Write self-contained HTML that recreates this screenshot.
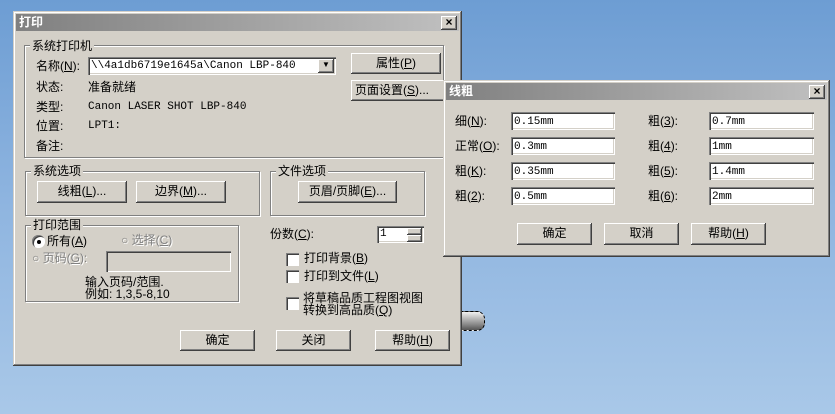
<!DOCTYPE html>
<html><head><meta charset="utf-8"><style>
*{margin:0;padding:0;box-sizing:border-box}
body{width:835px;height:414px;overflow:hidden;position:relative;background:linear-gradient(#6d9dd3,#8fb5e0 50%,#a9c8e8);font-family:"Liberation Sans","Noto Sans CJK SC",sans-serif;font-size:12px;color:#000}
.a{position:absolute;white-space:nowrap;line-height:14px}
.dlg{position:absolute;background:#d4d0c8;box-shadow:inset -1px -1px #404040,inset 1px 1px #d4d0c8,inset -2px -2px #808080,inset 2px 2px #fff}
.tb{position:absolute;left:3px;right:3px;top:3px;height:17px;background:linear-gradient(90deg,#808080,#c0c0c0);color:#fff;font-weight:bold;padding-left:3px;line-height:17px;font-size:12px}
.x{position:absolute;right:2px;top:2px;width:16px;height:14px;background:#d4d0c8;box-shadow:inset -1px -1px #404040,inset 1px 1px #fff,inset -2px -2px #808080;color:#000;font-weight:bold;font-size:12px;line-height:13px;text-align:center;font-family:"Liberation Sans",sans-serif}
.btn{position:absolute;background:#d4d0c8;box-shadow:inset -1px -1px #404040,inset 1px 1px #fff,inset -2px -2px #808080;text-align:center;line-height:20px;white-space:nowrap}
.f{position:absolute;background:#fff;box-shadow:inset 1px 1px #808080,inset 2px 2px #404040,inset -1px -1px #fff,inset -2px -2px #d4d0c8;font-family:"Liberation Mono",monospace;font-size:11px;line-height:20px;padding-left:3px;white-space:nowrap}
.g{position:absolute;border:1px solid #808080;box-shadow:inset 1px 1px #fff,1px 1px #fff}
.gl{position:absolute;background:#d4d0c8;padding:0 2px;line-height:14px;white-space:nowrap}
.cb{position:absolute;width:13px;height:13px;background:#fff;box-shadow:inset 1px 1px #808080,inset 2px 2px #404040,inset -1px -1px #fff}
.dis{color:#808080;text-shadow:1px 1px #fff}
</style></head><body>
<div style="position:absolute;left:455px;top:311px;width:30px;height:20px;border-radius:0 8px 8px 0;background:linear-gradient(#f0f0f0,#888 70%,#555);border:1px dashed #000"></div>

<div class="dlg" style="left:13px;top:11px;width:449px;height:355px">
<div class="tb">打印<div class="x">×</div></div>
</div>
<div class="g" style="left:24px;top:45px;width:420px;height:113px"></div>
<div class="gl" style="left:30px;top:39px">系统打印机</div>
<div class="a" style="left:36px;top:59px">名称(<u>N</u>):</div>
<div class="f" style="left:88px;top:57px;width:248px;height:18px;line-height:18px">\\4a1db6719e1645a\Canon LBP-840</div>
<div class="btn" style="left:318px;top:59px;width:16px;height:14px;line-height:12px;font-size:8px">▼</div>
<div class="btn" style="left:351px;top:53px;width:90px;height:21px">属性(<u>P</u>)</div>
<div class="btn" style="left:351px;top:80px;width:94px;height:21px;text-align:left;padding-left:4px">页面设置(<u>S</u>)...</div>
<div class="a" style="left:36px;top:80px">状态:</div><div class="a" style="left:88px;top:80px">准备就绪</div>
<div class="a" style="left:36px;top:100px">类型:</div><div class="a" style="left:88px;top:100px;font-family:'Liberation Mono',monospace;font-size:11px">Canon LASER SHOT LBP-840</div>
<div class="a" style="left:36px;top:119px">位置:</div><div class="a" style="left:88px;top:119px;font-family:'Liberation Mono',monospace;font-size:11px">LPT1:</div>
<div class="a" style="left:36px;top:139px">备注:</div>

<div class="g" style="left:25px;top:171px;width:235px;height:45px"></div>
<div class="gl" style="left:31px;top:164px">系统选项</div>
<div class="btn" style="left:37px;top:181px;width:90px;height:22px">线粗(<u>L</u>)...</div>
<div class="btn" style="left:136px;top:181px;width:90px;height:22px">边界(<u>M</u>)...</div>
<div class="g" style="left:270px;top:171px;width:155px;height:45px"></div>
<div class="gl" style="left:276px;top:164px">文件选项</div>
<div class="btn" style="left:298px;top:181px;width:99px;height:22px">页眉/页脚(<u>E</u>)...</div>

<div class="g" style="left:25px;top:225px;width:214px;height:77px"></div>
<div class="gl" style="left:31px;top:218px">打印范围</div>
<div class="cb" style="left:32px;top:235px;border-radius:50%"><div style="position:absolute;left:5px;top:5px;width:4px;height:4px;background:#000;border-radius:50%"></div></div>
<div class="a" style="left:47px;top:234px">所有(<u>A</u>)</div>
<div class="a dis" style="left:121px;top:233px">○ 选择(<u>C</u>)</div>
<div class="a dis" style="left:32px;top:251px">○ 页码(<u>G</u>):</div>
<div class="f" style="left:106px;top:251px;width:125px;height:21px;background:#d4d0c8"></div>
<div class="a" style="left:85px;top:275px">输入页码/范围.</div>
<div class="a" style="left:85px;top:287px">例如: 1,3,5-8,10</div>

<div class="a" style="left:270px;top:227px">份数(<u>C</u>):</div>
<div class="f" style="left:377px;top:226px;width:47px;height:17px;line-height:17px">1</div>
<div class="btn" style="left:407px;top:228px;width:15px;height:7px"></div>
<div class="btn" style="left:407px;top:235px;width:15px;height:7px"></div>
<div class="cb" style="left:286px;top:253px"></div><div class="a" style="left:304px;top:251px">打印背景(<u>B</u>)</div>
<div class="cb" style="left:286px;top:270px"></div><div class="a" style="left:304px;top:269px">打印到文件(<u>L</u>)</div>
<div class="cb" style="left:286px;top:297px"></div><div class="a" style="left:303px;top:291px">将草稿品质工程图视图</div><div class="a" style="left:303px;top:303px">转换到高品质(<u>Q</u>)</div>
<div class="btn" style="left:180px;top:330px;width:75px;height:21px">确定</div>
<div class="btn" style="left:276px;top:330px;width:75px;height:21px">关闭</div>
<div class="btn" style="left:375px;top:330px;width:75px;height:21px">帮助(<u>H</u>)</div>

<div class="dlg" style="left:443px;top:80px;width:387px;height:177px">
<div class="tb">线粗<div class="x">×</div></div>
</div>
<div class="a" style="left:455px;top:114px">细(<u>N</u>):</div>
<div class="a" style="left:455px;top:139px">正常(<u>O</u>):</div>
<div class="a" style="left:455px;top:164px">粗(<u>K</u>):</div>
<div class="a" style="left:455px;top:189px">粗(<u>2</u>):</div>
<div class="f" style="left:511px;top:112px;width:104px;height:18px">0.15mm</div>
<div class="f" style="left:511px;top:137px;width:104px;height:18px">0.3mm</div>
<div class="f" style="left:511px;top:162px;width:104px;height:18px">0.35mm</div>
<div class="f" style="left:511px;top:187px;width:104px;height:18px">0.5mm</div>
<div class="a" style="left:648px;top:114px">粗(<u>3</u>):</div>
<div class="a" style="left:648px;top:139px">粗(<u>4</u>):</div>
<div class="a" style="left:648px;top:164px">粗(<u>5</u>):</div>
<div class="a" style="left:648px;top:189px">粗(<u>6</u>):</div>
<div class="f" style="left:709px;top:112px;width:105px;height:18px">0.7mm</div>
<div class="f" style="left:709px;top:137px;width:105px;height:18px">1mm</div>
<div class="f" style="left:709px;top:162px;width:105px;height:18px">1.4mm</div>
<div class="f" style="left:709px;top:187px;width:105px;height:18px">2mm</div>
<div class="btn" style="left:517px;top:223px;width:75px;height:22px">确定</div>
<div class="btn" style="left:604px;top:223px;width:75px;height:22px">取消</div>
<div class="btn" style="left:691px;top:223px;width:75px;height:22px">帮助(<u>H</u>)</div>
</body></html>
